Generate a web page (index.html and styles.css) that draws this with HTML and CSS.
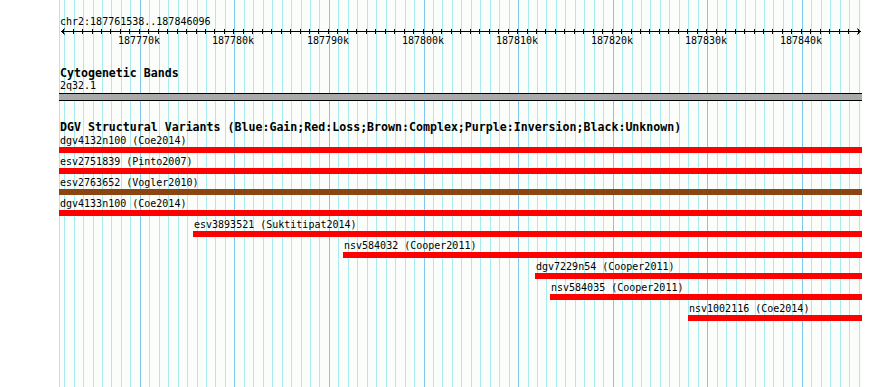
FILE: index.html
```html
<!DOCTYPE html>
<html lang="en">
<head>
    <meta charset="UTF-8">
    <title>chr2:187761538..187846096</title>
    <link rel="stylesheet" href="styles.css">
</head>
<body>
    <div class="browser">
        <div class="grid" id="grid"></div>

        <div class="tracks">
            <div class="location">chr2:187761538..187846096</div>
            <svg class="ruler" id="ruler" width="890" height="20"></svg>

            <div class="track-title cyto-title">Cytogenetic Bands</div>
            <div class="band-name">2q32.1</div>
            <div class="band"></div>

            <div class="track-title dgv-title">DGV Structural Variants (Blue:Gain;Red:Loss;Brown:Complex;Purple:Inversion;Black:Unknown)</div>
            <div class="features">
                <div class="feature">
                    <div class="feature-label">dgv4132n100 (Coe2014)</div>
                    <div class="feature-bar loss"></div>
                </div>
                <div class="feature">
                    <div class="feature-label">esv2751839 (Pinto2007)</div>
                    <div class="feature-bar loss"></div>
                </div>
                <div class="feature">
                    <div class="feature-label">esv2763652 (Vogler2010)</div>
                    <div class="feature-bar complex"></div>
                </div>
                <div class="feature">
                    <div class="feature-label">dgv4133n100 (Coe2014)</div>
                    <div class="feature-bar loss"></div>
                </div>
                <div class="feature" style="margin-left: 134px">
                    <div class="feature-label">esv3893521 (Suktitipat2014)</div>
                    <div class="feature-bar loss"></div>
                </div>
                <div class="feature" style="margin-left: 284px">
                    <div class="feature-label">nsv584032 (Cooper2011)</div>
                    <div class="feature-bar loss"></div>
                </div>
                <div class="feature" style="margin-left: 476px">
                    <div class="feature-label">dgv7229n54 (Cooper2011)</div>
                    <div class="feature-bar loss"></div>
                </div>
                <div class="feature" style="margin-left: 491px">
                    <div class="feature-label">nsv584035 (Cooper2011)</div>
                    <div class="feature-bar loss"></div>
                </div>
                <div class="feature" style="margin-left: 629px">
                    <div class="feature-label">nsv1002116 (Coe2014)</div>
                    <div class="feature-bar loss"></div>
                </div>
            </div>
        </div>
    </div>

    <script>
        const grid = document.getElementById("grid");
        const ruler = document.getElementById("ruler");
        const SVG = "http://www.w3.org/2000/svg";

        // 187770k sits at x=140.3, 9.457px per kb
        function toX(kb) {
            return Math.floor(140.3 + (kb - 187770) * 9.457);
        }

        function addLine(x, major) {
            const line = document.createElement("div");
            line.className = major ? "gridline major" : "gridline";
            line.style.left = (x - 59) + "px";
            grid.appendChild(line);
        }

        function svgEl(name, attrs) {
            const el = document.createElementNS(SVG, name);
            for (const key in attrs) el.setAttribute(key, attrs[key]);
            ruler.appendChild(el);
            return el;
        }

        addLine(59, false);

        svgEl("path", { d: "M61 3.5H861M65 0.5L61.5 3.5L65 6.5M857 0.5L860.5 3.5L857 6.5", class: "axis" });

        for (let kb = 187762; kb <= 187846; kb++) {
            const x = toX(kb);
            const major = kb % 10 === 0;
            addLine(x, major);
            svgEl("path", { d: "M" + (x - 0.5) + " 1V6", class: "axis" });
            if (major) {
                const label = svgEl("text", { x: x - 1, y: 16, "text-anchor": "middle", class: "tick-label" });
                label.textContent = kb + "k";
            }
        }
    </script>
</body>
</html>
```

FILE: styles.css
```css
body {
    margin: 0;
    padding: 0;
    background: #ffffff;
    font-family: "DejaVu Sans Mono", "Liberation Mono", monospace;
    font-size: 10px;
    color: #000000;
}

.browser {
    position: relative;
    width: 890px;
    height: 387px;
    overflow: hidden;
}

.grid {
    position: absolute;
    top: 0;
    bottom: 0;
    left: 59px;
    width: 803px;
    background: #fafdfa;
}

.gridline {
    position: absolute;
    top: 0;
    bottom: 0;
    width: 1px;
    background: #a8ecf0;
}

.gridline.major {
    background: #80c8ec;
}

.tracks {
    position: relative;
    display: flex;
    flex-direction: column;
}

.location {
    margin-top: 16px;
    padding-left: 60px;
    line-height: 12px;
    height: 12px;
}

.ruler {
    display: block;
}

.ruler .axis {
    fill: none;
    stroke: #000000;
    stroke-width: 1;
}

.ruler .tick-label {
    font-family: "DejaVu Sans Mono", "Liberation Mono", monospace;
    font-size: 10px;
    fill: #000000;
}

.track-title {
    padding-left: 60px;
    font-weight: bold;
    font-size: 11.6px;
    line-height: 13px;
    height: 13px;
    white-space: nowrap;
}

.cyto-title {
    margin-top: 19px;
}

.band-name {
    padding-left: 60px;
    line-height: 12px;
    height: 12px;
}

.band {
    margin: 1px 28px 0 59px;
    height: 6px;
    background: #aaaaaa;
    border-top: 1px solid #000000;
    border-bottom: 1px solid #000000;
}

.dgv-title {
    margin-top: 20px;
}

.features {
    display: flex;
    flex-direction: column;
    margin-left: 59px;
    width: 803px;
}

.feature {
    display: flex;
    flex-direction: column;
    padding-bottom: 2px;
}

.feature-label {
    line-height: 13px;
    height: 13px;
    padding-left: 1px;
    white-space: nowrap;
}

.feature-bar {
    height: 6px;
}

.feature-bar.loss {
    background: #ff0000;
}

.feature-bar.complex {
    background: #8b4513;
}
```
